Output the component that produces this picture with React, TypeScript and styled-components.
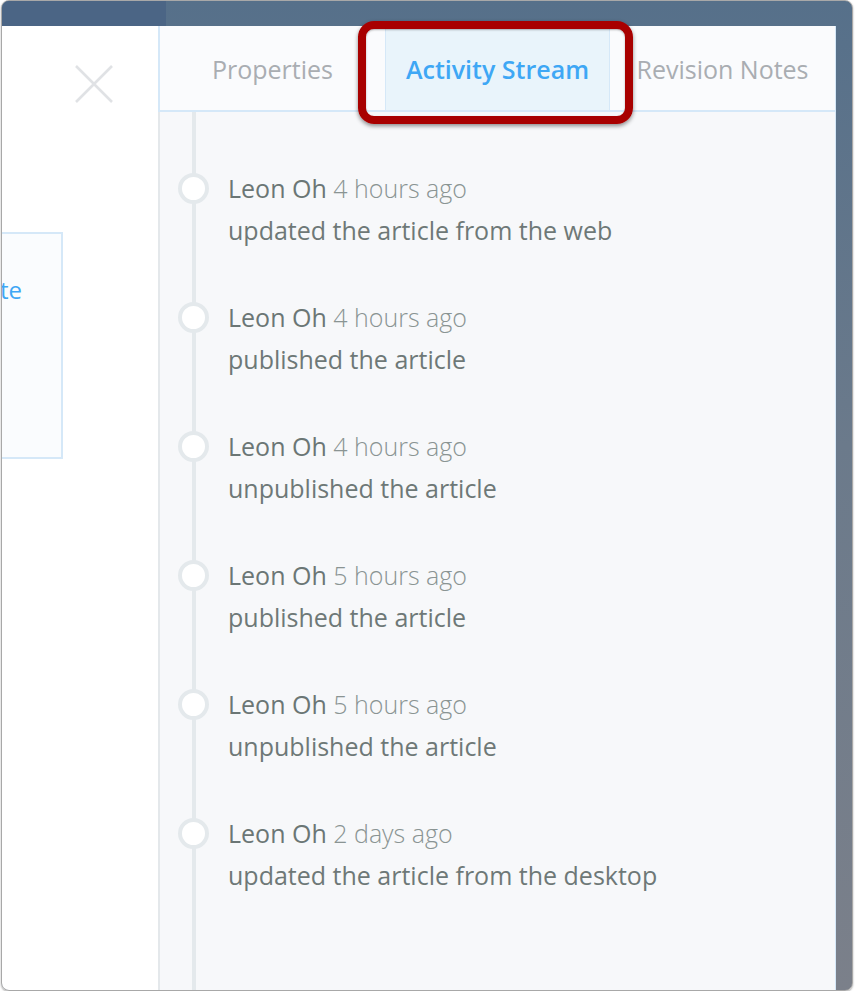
import React from "react";
import styled, { createGlobalStyle } from "styled-components";

interface Activity {
  who: string;
  when: string;
  what: string;
}

const activities: Activity[] = [
  { who: "Leon Oh", when: "4 hours ago", what: "updated the article from the web" },
  { who: "Leon Oh", when: "4 hours ago", what: "published the article" },
  { who: "Leon Oh", when: "4 hours ago", what: "unpublished the article" },
  { who: "Leon Oh", when: "5 hours ago", what: "published the article" },
  { who: "Leon Oh", when: "5 hours ago", what: "unpublished the article" },
  { who: "Leon Oh", when: "2 days ago", what: "updated the article from the desktop" }
];

const tabs = ["Properties", "Activity Stream", "Revision Notes"];

const GlobalStyle = createGlobalStyle`
  html, body {
    margin: 0;
    padding: 0;
    background: #ffffff;
  }
  body {
    font-family: "Open Sans", Lato, sans-serif;
  }
`;

const App: React.FC = () => {
  return (
    <>
      <GlobalStyle />
      <Frame>
        <TopBar>
          <TopBarLeft />
        </TopBar>
        <Body>
          <LeftPanel>
            <CloseButton aria-label="Close">
              <svg width="38" height="38" viewBox="0 0 38 38">
                <path d="M1 1 L37 37 M37 1 L1 37" stroke="#e0e2e5" strokeWidth="2.6" fill="none" />
              </svg>
            </CloseButton>
            <ActionCard>Duplicate</ActionCard>
          </LeftPanel>
          <Sidebar>
            <TabRow>
              {tabs.map((t) => (
                <Tab key={t} $active={t === "Activity Stream"}>
                  {t}
                </Tab>
              ))}
            </TabRow>
            <Timeline>
              {activities.map((a, i) => (
                <Item key={i}>
                  <Dot />
                  <ItemText>
                    <Line>
                      <Who>{a.who}</Who> <When>{a.when}</When>
                    </Line>
                    <Line>{a.what}</Line>
                  </ItemText>
                </Item>
              ))}
            </Timeline>
          </Sidebar>
        </Body>
        <Highlight />
      </Frame>
    </>
  );
};

const Frame = styled.div`
  position: relative;
  box-sizing: border-box;
  margin: 0 0 0 1px;
  width: 852px;
  height: 991px;
  border: 1px solid #a8a8a8;
  border-radius: 8px;
  overflow: hidden;
  box-shadow: 0 1px 2px rgba(0, 0, 0, 0.35);
  background: linear-gradient(to bottom, #56708a 0%, #6b7a8b 45%, #7b808a 100%);
  display: flex;
  flex-direction: column;
`;

const TopBar = styled.div`
  height: 25px;
  flex: none;
  display: flex;
`;

const TopBarLeft = styled.div`
  width: 164px;
  background: #4b6585;
`;

const Body = styled.div`
  flex: 1;
  display: flex;
  min-height: 0;
`;

const LeftPanel = styled.div`
  width: 156px;
  flex: none;
  background: #ffffff;
  display: flex;
  flex-direction: column;
  overflow: hidden;
`;

const CloseButton = styled.div`
  width: 38px;
  height: 38px;
  margin: 39px 0 0 73px;
  cursor: pointer;
`;

const ActionCard = styled.div`
  box-sizing: border-box;
  width: 211px;
  height: 227px;
  margin: 129px 0 0 -150px;
  padding: 36px 39px 0 0;
  border: 2px solid #d5e8f8;
  background: #fafcfe;
  color: #3ea7f5;
  font-size: 24px;
  line-height: 40px;
  text-align: right;
`;

const Sidebar = styled.div`
  width: 678px;
  flex: none;
  box-sizing: border-box;
  border-left: 2px solid #e4e8eb;
  border-right: 1px solid #d5e8f8;
  background: #f7f8fa;
  display: flex;
  flex-direction: column;
`;

const TabRow = styled.div`
  display: flex;
  height: 86px;
  box-sizing: border-box;
  margin-left: -2px;
  border-left: 2px solid #d5e8f8;
  border-bottom: 2px solid #d5e8f8;
  background: #fafbfd;
`;

const Tab = styled.div<{ $active?: boolean }>`
  flex: 1;
  display: flex;
  align-items: center;
  justify-content: center;
  box-sizing: border-box;
  padding-top: 2px;
  font-size: 25px;
  font-weight: ${({ $active }) => ($active ? 600 : 400)};
  color: ${({ $active }) => ($active ? "#3ea7f5" : "#a9adb2")};
  background: ${({ $active }) => ($active ? "#e9f4fb" : "transparent")};
  border-left: 1px solid ${({ $active }) => ($active ? "#d5e8f8" : "transparent")};
  border-right: 1px solid ${({ $active }) => ($active ? "#d5e8f8" : "transparent")};
  cursor: pointer;
`;

const Timeline = styled.div`
  flex: 1;
  margin-left: 32px;
  padding-top: 55px;
  border-left: 4px solid #e4e9ec;
`;

const Item = styled.div`
  display: flex;
  align-items: flex-start;
  height: 129px;
`;

const Dot = styled.div`
  box-sizing: border-box;
  flex: none;
  width: 31px;
  height: 31px;
  margin: 6px 0 0 -18px;
  border: 4px solid #e4e9ec;
  border-radius: 50%;
  background: #ffffff;
`;

const ItemText = styled.div`
  margin-left: 19px;
  color: #6e7877;
  font-size: 25px;
  line-height: 42px;
`;

const Line = styled.div`
  white-space: nowrap;
`;

const Who = styled.span`
  font-weight: 400;
  color: #6b7675;
`;

const When = styled.span`
  font-weight: 300;
  color: #8a9493;
`;

const Highlight = styled.div`
  position: absolute;
  left: 356px;
  top: 20px;
  width: 275px;
  height: 103px;
  box-sizing: border-box;
  border: 8px solid #a80000;
  border-radius: 16px;
  box-shadow: 0 2px 4px rgba(0, 0, 0, 0.45), inset 0 1px 2px rgba(0, 0, 0, 0.3);
  pointer-events: none;
`;

export default App;
